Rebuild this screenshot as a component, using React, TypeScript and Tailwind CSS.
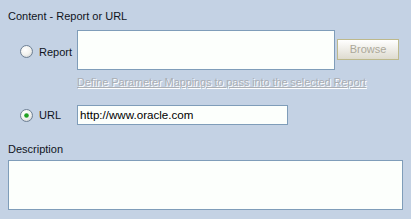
import React from "react";

function Radio({ checked }: { checked?: boolean }) {
  return (
    <svg width="13" height="13" viewBox="0 0 13 13" className="shrink-0">
      <defs>
        <radialGradient id={checked ? "rg1" : "rg0"} cx="0.4" cy="0.35" r="0.7">
          <stop offset="0" stopColor="#ffffff" />
          <stop offset="0.6" stopColor="#f2f2ee" />
          <stop offset="1" stopColor="#cfd3d6" />
        </radialGradient>
      </defs>
      <circle cx="6.5" cy="6.5" r="6" fill={`url(#${checked ? "rg1" : "rg0"})`} stroke="#6d7f94" strokeWidth="1" />
      {checked && <circle cx="6.5" cy="6.5" r="2.3" fill="#21a121" />}
    </svg>
  );
}

export default function App() {
  return (
    <div
      className="w-[411px] h-[219px] bg-[#c4d2e4] pt-[9px] px-[8px] text-[11px] leading-[14px] text-[#10141c]"
      style={{ fontFamily: '"Liberation Sans", Arial, sans-serif' }}
    >
      <div>Content - Report or URL</div>

      <div className="flex items-center mt-[7px] ml-[12px]">
        <div className="flex items-center h-[40px] pt-[3px]">
          <Radio />
          <span className="ml-[6px] w-[38px]">Report</span>
        </div>
        <div className="w-[258px] h-[40px] border border-[#7f9db9] bg-[#fcfffc]" />
        <div className="ml-[2px] -mt-[2px] w-[62px] h-[21px] border border-[#bdb98c] bg-gradient-to-b from-[#ffffff] to-[#dedbcf] flex items-center justify-center text-[#aca899]">
          Browse
        </div>
      </div>

      <div className="ml-[69px] mt-[5px] text-[#aaaeb4] underline tracking-[-0.1px] [text-shadow:1px_1px_0_#ffffff]">
        Define Parameter Mappings to pass into the selected Report
      </div>

      <div className="flex items-center mt-[16px] ml-[12px]">
        <Radio checked />
        <span className="ml-[6px] w-[38px]">URL</span>
        <div className="w-[211px] h-[20px] border border-[#7f9db9] bg-[#fcfffc] px-[2px] flex items-center text-black text-[11.6px]">
          http://www.oracle.com
        </div>
      </div>

      <div className="mt-[17px]">Description</div>
      <div className="mt-[4px] w-[395px] h-[50px] border border-[#7f9db9] bg-[#fcfffc]" />
    </div>
  );
}
